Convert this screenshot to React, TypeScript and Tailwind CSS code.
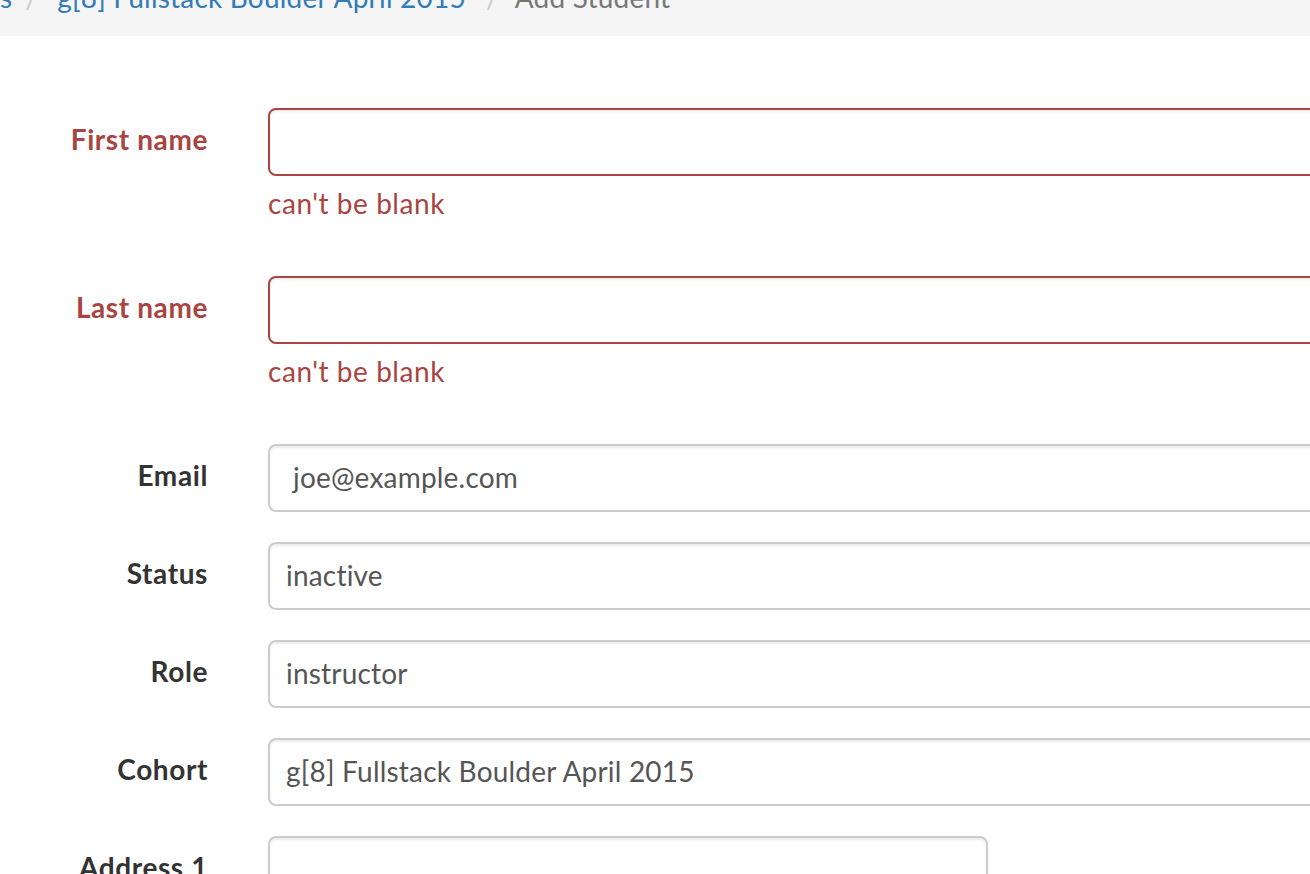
import React from "react";

type Field = {
  label: string;
  value?: string;
  kind: "text" | "select";
  error?: string;
  narrow?: boolean;
};

const fields: Field[] = [
  { label: "First name", kind: "text", error: "can't be blank" },
  { label: "Last name", kind: "text", error: "can't be blank" },
  { label: "Email", kind: "text", value: "joe@example.com" },
  { label: "Status", kind: "select", value: "inactive" },
  { label: "Role", kind: "select", value: "instructor" },
  { label: "Cohort", kind: "select", value: "g[8] Fullstack Boulder April 2015" },
  { label: "Address 1", kind: "text", narrow: true },
];

function FormRow({ field }: { field: Field }) {
  const hasError = !!field.error;
  return (
    <div className="flex items-start">
      <div className="w-[208px] h-[68px] pb-[6px] shrink-0 flex items-center justify-end">
        <label
          className={
            "text-[28px] leading-[40px] font-bold tracking-[0.6px] whitespace-nowrap " +
            (hasError ? "text-[#a94442]" : "text-[#333333]")
          }
        >
          {field.label}
        </label>
      </div>
      <div className="ml-[60px] flex flex-col shrink-0">
        <div
          className={
            "h-[68px] pb-[3px] rounded-[8px] border-2 bg-white flex items-center shadow-[inset_0_2px_2px_rgba(0,0,0,0.075)] " +
            (hasError ? "border-[#a94442] " : "border-[#cccccc] ") +
            (field.narrow ? "w-[720px] " : "w-[1100px] ") +
            (field.kind === "select" ? "pl-[16px]" : "pl-[23px]")
          }
        >
          <span className="text-[28px] leading-[40px] tracking-[0.2px] text-[#555555] whitespace-nowrap">
            {field.value ?? ""}
          </span>
        </div>
        {hasError && (
          <p className="mt-[7px] mb-[23px] text-[28px] leading-[40px] tracking-[0.55px] text-[#a94442]">
            {field.error}
          </p>
        )}
      </div>
    </div>
  );
}

export default function App() {
  return (
    <div
      className="w-[1310px] h-[874px] overflow-hidden bg-white"
      style={{ fontFamily: "Lato, 'Open Sans', sans-serif" }}
    >
      <div className="mt-[-39px] h-[75px] bg-[#f5f5f5] pt-[16px] flex text-[28px] leading-[40px] tracking-[0.2px] whitespace-nowrap">
        <a className="text-[#337ab7]">s</a>
        <span className="ml-[13px] mr-[19px] text-[#cccccc]">/</span>
        <a className="text-[#337ab7]">g[8] Fullstack Boulder April 2015</a>
        <span className="ml-[20px] mr-[16px] text-[#cccccc]">/</span>
        <span className="text-[#777777]">Add Student</span>
      </div>
      <form className="mt-[72px] flex flex-col gap-[30px]">
        {fields.map((f) => (
          <FormRow key={f.label} field={f} />
        ))}
      </form>
    </div>
  );
}
